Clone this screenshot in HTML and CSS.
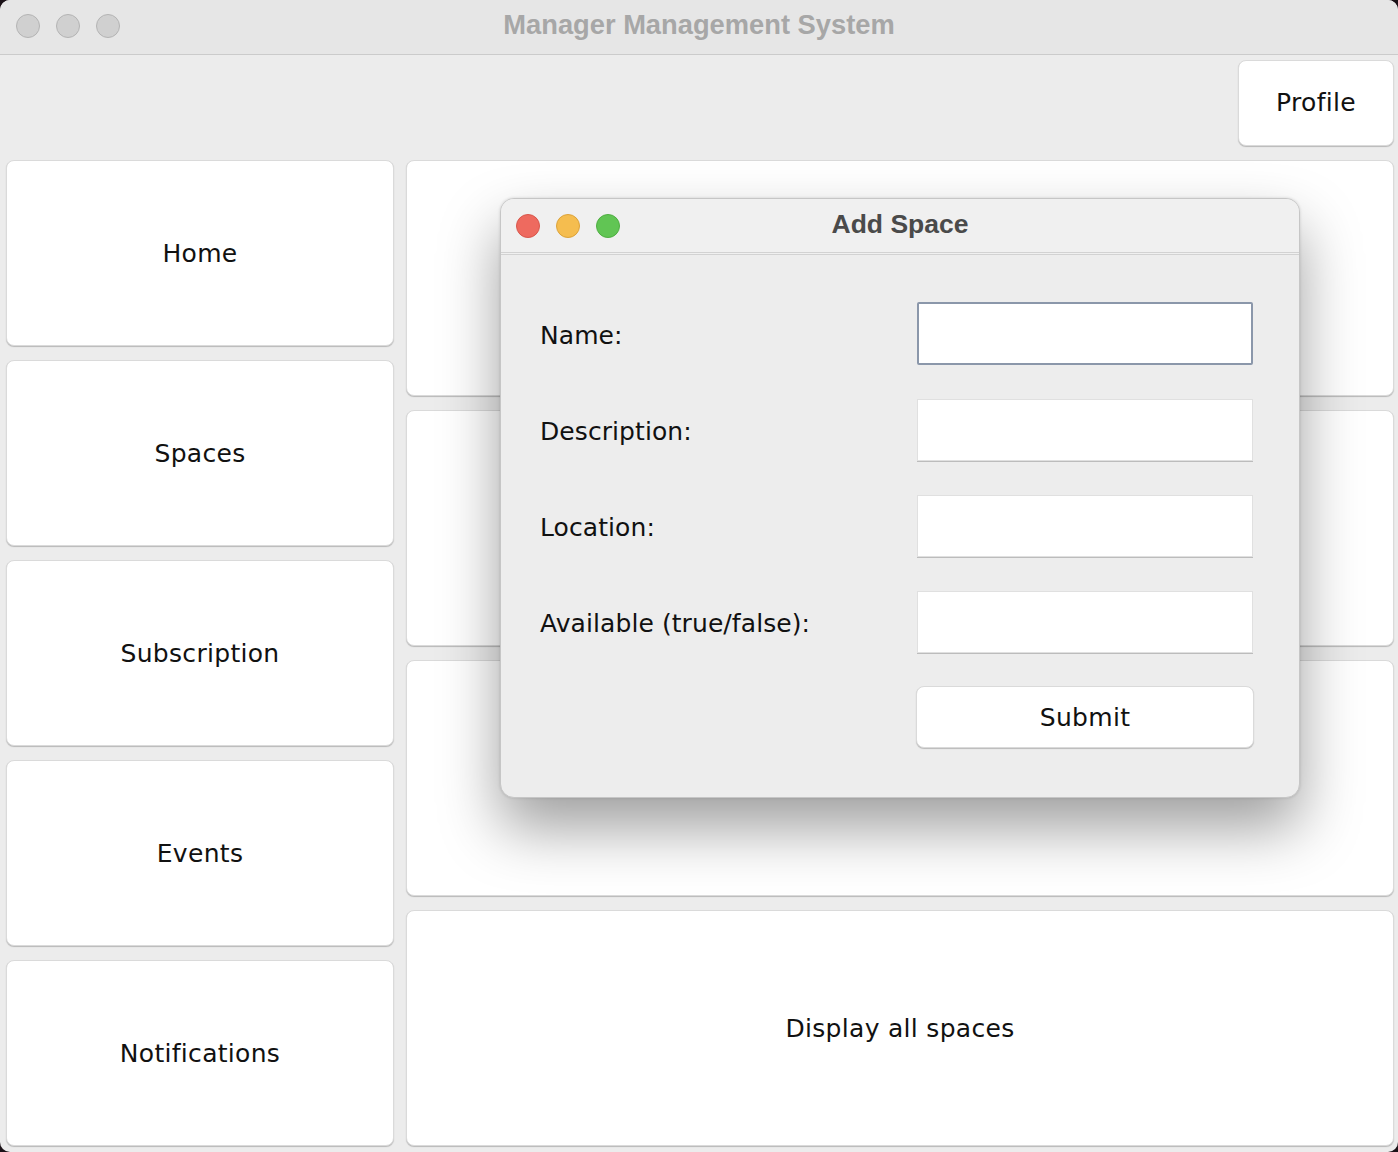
FILE: index.html
```html
<!DOCTYPE html>
<html lang="en">
<head>
<meta charset="utf-8">
<title>Manager Management System</title>
<link rel="stylesheet" href="styles.css">
</head>
<body>
<div class="window">
  <div class="titlebar">
    <div class="lights">
      <span class="light gray"></span>
      <span class="light gray"></span>
      <span class="light gray"></span>
    </div>
    <div class="title">Manager Management System</div>
    <div></div>
  </div>
  <div class="content">
    <div class="topbar">
      <button class="btn profile">Profile</button>
    </div>
    <div class="main">
      <div class="col left">
        <button class="btn panel small">Home</button>
        <button class="btn panel small">Spaces</button>
        <button class="btn panel small">Subscription</button>
        <button class="btn panel small">Events</button>
        <button class="btn panel small">Notifications</button>
      </div>
      <div class="col right">
        <button class="btn panel big"></button>
        <button class="btn panel big"></button>
        <button class="btn panel big"></button>
        <button class="btn panel big">Display all spaces</button>
      </div>
    </div>
  </div>

  <div class="dialog">
    <div class="dlg-titlebar">
      <div class="lights">
        <span class="light red"></span>
        <span class="light yellow"></span>
        <span class="light green"></span>
      </div>
      <div class="dlg-title">Add Space</div>
      <div></div>
    </div>
    <div class="form">
      <label class="label">Name:</label>
      <div class="field focused"></div>
      <label class="label">Description:</label>
      <div class="field"></div>
      <label class="label">Location:</label>
      <div class="field"></div>
      <label class="label">Available (true/false):</label>
      <div class="field"></div>
      <div></div>
      <button class="btn submit">Submit</button>
    </div>
  </div>
</div>
</body>
</html>
```

FILE: styles.css
```css
* { box-sizing: border-box; }

html, body {
  margin: 0;
  padding: 0;
  background: #1b1218;
}

.window {
  position: relative;
  width: 1398px;
  height: 1152px;
  background: #ececec;
  border-radius: 10px;
  overflow: hidden;
  font-family: "DejaVu Sans", "Lucida Grande", sans-serif;
}

.titlebar {
  height: 55px;
  background: #e6e6e6;
  border-bottom: 1px solid #cbcbcb;
  display: grid;
  grid-template-columns: 1fr auto 1fr;
  align-items: center;
}

.lights {
  display: flex;
  gap: 16px;
  padding-left: 16px;
}

.light {
  width: 24px;
  height: 24px;
  border-radius: 50%;
  display: block;
}

.light.gray { background: #d0d0d0; border: 1px solid #b4b4b4; }
.light.red { background: #ee6a5f; border: 1px solid #d8574c; }
.light.yellow { background: #f5bd4f; border: 1px solid #dca33a; }
.light.green { background: #61c554; border: 1px solid #4fae42; }

.titlebar .lights { margin-top: -2px; }

.title {
  font-family: "Liberation Sans", Arial, sans-serif;
  font-weight: bold;
  font-size: 27.3px;
  color: #a7a7a7;
  margin-top: -4px;
}

.content {
  padding: 5px 4px 6px 6px;
  display: flex;
  flex-direction: column;
  gap: 14px;
}

.topbar {
  display: flex;
  justify-content: flex-end;
}

.btn {
  background: #ffffff;
  border: 1px solid #dadada;
  border-radius: 8px;
  box-shadow: 0 1px 1px rgba(0, 0, 0, 0.22);
  font-family: "DejaVu Sans", "Lucida Grande", sans-serif;
  font-size: 25px;
  letter-spacing: 0.3px;
  color: #111111;
  padding: 0;
  margin: 0;
  display: flex;
  align-items: center;
  justify-content: center;
}

.profile {
  width: 156px;
  height: 86px;
  padding-bottom: 2px;
}

.main {
  display: flex;
  gap: 12px;
}

.col {
  display: flex;
  flex-direction: column;
  gap: 14px;
}

.left { width: 388px; }
.right { flex: 1; }

.panel.small { height: 186px; }
.panel.big { height: 236px; }

.dialog {
  position: absolute;
  left: 500px;
  top: 198px;
  width: 800px;
  height: 600px;
  background: #ededed;
  border: 1px solid #c6c6c6;
  border-radius: 14px;
  box-shadow: 0 30px 60px rgba(0, 0, 0, 0.38), 0 0 3px rgba(0, 0, 0, 0.15);
  overflow: hidden;
}

.dlg-titlebar {
  height: 56px;
  background: #f0f0f0;
  border-bottom: 3px double #d2d2d2;
  display: grid;
  grid-template-columns: 1fr auto 1fr;
  align-items: center;
}

.dlg-titlebar .lights { padding-left: 15px; }

.dlg-title {
  font-family: "Liberation Sans", Arial, sans-serif;
  font-weight: bold;
  font-size: 26.5px;
  color: #4a4a4a;
  margin-top: -2px;
}

.form {
  display: grid;
  grid-template-columns: 377px 336px;
  grid-auto-rows: 62px;
  row-gap: 34px;
  padding: 48px 0 0 39px;
  align-items: center;
}

.label {
  font-size: 25px;
  color: #111111;
  letter-spacing: 0.08px;
  padding-top: 2px;
}

.field {
  height: 62px;
  background: #ffffff;
  border: 1px solid #e0e0e0;
  box-shadow: 0 1px 0 #bcbcbc;
}

.field.focused {
  height: 63px;
  border: 2px solid #8b97aa;
  border-radius: 2px;
  box-shadow: none;
  margin-top: -1px;
}

.submit {
  width: 338px;
  height: 62px;
  margin-left: -1px;
  margin-top: -2px;
}
```
